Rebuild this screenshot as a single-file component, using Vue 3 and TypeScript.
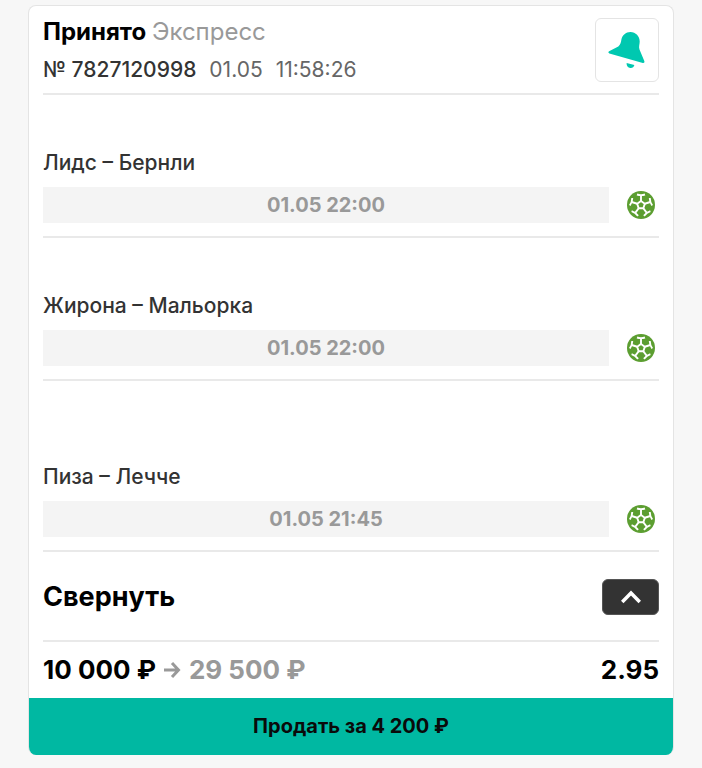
<script setup lang="ts">
interface BetEvent {
  id: number
  title: string
  date: string
  spaced: boolean
}

const events: BetEvent[] = [
  { id: 1, title: 'Лидс – Бернли', date: '01.05 22:00', spaced: false },
  { id: 2, title: 'Жирона – Мальорка', date: '01.05 22:00', spaced: false },
  { id: 3, title: 'Пиза – Лечче', date: '01.05 21:45', spaced: true },
]

const seams: number[] = [0, 72, 144, 216, 288]
</script>

<template>
  <main class="page">
    <article class="card">
      <div class="content">
        <header class="head">
          <div class="summary">
            <h1 class="status">Принято <span class="kind">Экспресс</span></h1>
            <p class="meta">
              <span class="number">№ 7827120998</span>
              <span>01.05</span>
              <span>11:58:26</span>
            </p>
          </div>
          <button class="bell" type="button" aria-label="Уведомления">
            <svg width="38" height="38" viewBox="0 0 38 38" aria-hidden="true">
              <path
                d="M13.400 8.600C14.200 4.200 17.900 1 22.400 1c5.400 0 9.300 4.300 9.300 9.500 0 2.600-1.200 5.600-.2 7.900l4.800 11.600c.5 1.300-.2 2.200-1.500 1.900L1.400 22.600c-1.200-.4-1.300-1.600-.3-2.300l9.200-4.800c2.100-1.500 2.600-3.900 3.100-6.900z"
                fill="#00c8b0"
              />
              <path d="M18.600 32l7.800 2.100c-.5 2.100-2.200 3.200-4.200 2.900-2.200-.3-3.800-2.300-3.600-5z" fill="#00c8b0" />
            </svg>
          </button>
        </header>

        <ul class="events">
          <li v-for="event in events" :key="event.id" class="event" :class="{ spaced: event.spaced }">
            <h2 class="title">{{ event.title }}</h2>
            <div class="line">
              <time class="date">{{ event.date }}</time>
              <svg class="ball" viewBox="0 0 28 28" role="img" aria-label="Футбол">
                <circle cx="14" cy="14" r="14" fill="#5c9e31" />
                <g fill="none" stroke="#fff" stroke-width="1.900">
                  <path d="M14 10l3.800 2.800-1.500 4.400h-4.600l-1.500-4.400z" />
                  <path
                    v-for="angle in seams"
                    :key="angle"
                    d="M14 10V4.200M10 3.500Q14 4.800 18 3.500"
                    :transform="`rotate(${angle} 14 14)`"
                  />
                </g>
              </svg>
            </div>
          </li>
        </ul>

        <div class="collapse">
          <span id="collapse-label" class="collapse-label">Свернуть</span>
          <button class="toggle" type="button" aria-labelledby="collapse-label">
            <svg width="20" height="14" viewBox="0 0 20 14" aria-hidden="true">
              <path d="M1.200 12L10 3l8.800 9" fill="none" stroke="#fff" stroke-width="3.600" />
            </svg>
          </button>
        </div>

        <div class="totals">
          <p class="sums">
            <span>10 000 ₽</span>
            <svg width="17" height="18" viewBox="0 0 17 18" aria-hidden="true">
              <path d="M0 9h14M8 2l6.500 7L8 16" fill="none" stroke="#999" stroke-width="3" />
            </svg>
            <span class="win">29 500 ₽</span>
          </p>
          <strong class="odds">2.95</strong>
        </div>
      </div>
      <button class="sell" type="button">Продать за 4 200 ₽</button>
    </article>
  </main>
</template>

<style>
body {
  background: #f7f7f7;
}
</style>

<style scoped>
.page {
  padding: 5px 28px 12px;
  color: #000;
  font-family: Inter, 'Noto Sans', sans-serif;
}

.card {
  overflow: hidden;
  border: 1px solid #e4e4e4;
  border-bottom: 0;
  border-radius: 8px;
  background: #fff;
}

.content {
  padding: 0 14px;
}

h1,
h2,
p,
ul {
  margin: 0;
  padding: 0;
}

button {
  padding: 0;
  font-family: inherit;
  cursor: pointer;
}

.head {
  display: flex;
  align-items: flex-start;
  justify-content: space-between;
  padding: 12px 0 11px;
  border-bottom: 2px solid #e9e9e9;
}

.status {
  font-size: 24px;
  font-weight: 700;
  line-height: 28px;
}

.kind {
  color: #999;
  font-weight: 400;
}

.meta {
  display: flex;
  gap: 13px;
  margin-top: 10px;
  color: #666;
  font-size: 21px;
  line-height: 28px;
}

.number {
  color: #333;
  font-weight: 500;
}

.bell {
  display: flex;
  align-items: center;
  justify-content: center;
  width: 64px;
  height: 64px;
  border: 1px solid #e4e4e4;
  border-radius: 6px;
  background: #fff;
}

.head .summary {
  height: 64px;
}

.events {
  list-style: none;
}

.event {
  padding: 54px 0 13px;
  border-bottom: 2px solid #e9e9e9;
}

.spaced {
  padding-top: 82px;
}

.title {
  color: #333;
  font-size: 21px;
  font-weight: 500;
  line-height: 28px;
}

.line {
  display: flex;
  align-items: center;
  gap: 18px;
  margin-top: 10px;
  padding-right: 4px;
}

.date {
  flex: 1;
  background: #f4f4f4;
  color: #999;
  font-size: 20px;
  font-weight: 700;
  line-height: 36px;
  text-align: center;
}

.ball {
  width: 28px;
  height: 28px;
}

.collapse {
  display: flex;
  align-items: center;
  justify-content: space-between;
  padding: 27px 0 25px;
  border-bottom: 2px solid #e9e9e9;
}

.collapse-label {
  font-size: 27px;
  font-weight: 700;
  line-height: 36px;
}

.toggle {
  display: flex;
  align-items: center;
  justify-content: center;
  width: 57px;
  height: 36px;
  border: 1px solid #555;
  border-radius: 6px;
  background: #333;
}

.totals {
  display: flex;
  align-items: center;
  justify-content: space-between;
  font-size: 26px;
  font-weight: 700;
  line-height: 56px;
}

.sums {
  display: flex;
  align-items: center;
  gap: 8px;
}

.win {
  color: #999;
}

.odds {
  font-weight: 700;
}

.sell {
  display: block;
  width: calc(100% + 2px);
  margin: 0 -1px;
  border: 0;
  background: #00b8a2;
  color: #0a0a0a;
  font-size: 20px;
  font-weight: 700;
  line-height: 57px;
}
</style>
